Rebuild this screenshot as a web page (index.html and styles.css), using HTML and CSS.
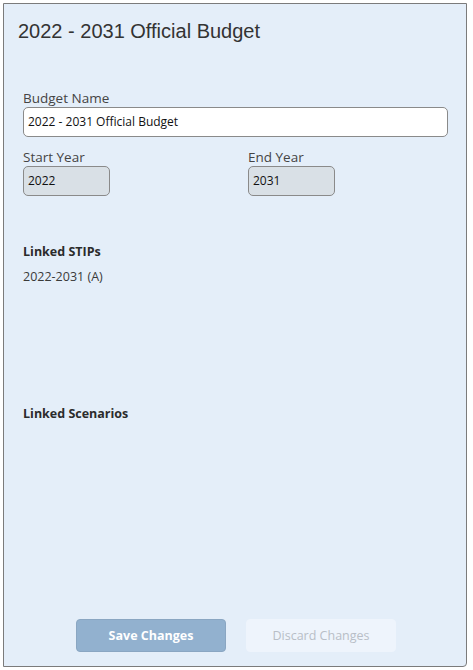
FILE: index.html
```html
<!DOCTYPE html>
<html>
<head>
<meta charset="utf-8">
<link rel="stylesheet" href="styles.css">
</head>
<body>
<div class="panel">
  <h1 class="title">2022 - 2031 Official Budget</h1>
  <div class="form">
    <div class="field">
      <label class="label">Budget Name</label>
      <div class="input wide">2022 - 2031 Official Budget</div>
    </div>
    <div class="row">
      <div class="field col">
        <label class="label">Start Year</label>
        <div class="input year">2022</div>
      </div>
      <div class="field col">
        <label class="label">End Year</label>
        <div class="input year">2031</div>
      </div>
    </div>
    <div class="section stips">
      <div class="section-title">Linked STIPs</div>
      <div class="section-item">2022-2031 (A)</div>
    </div>
    <div class="section scen">
      <div class="section-title">Linked Scenarios</div>
    </div>
  </div>
  <div class="actions">
    <button class="btn save">Save Changes</button>
    <button class="btn discard">Discard Changes</button>
  </div>
</div>
</body>
</html>
```

FILE: styles.css
```css
html, body {
  margin: 0;
  padding: 0;
  background: #ffffff;
}
body {
  font-family: "Open Sans", "Noto Sans", sans-serif;
  color: #333333;
}
.panel {
  box-sizing: border-box;
  margin: 3px 0 0 3px;
  width: 464px;
  height: 664px;
  border: 1px solid #7b7b7b;
  border-radius: 0 0 4px 0;
  background: #e4eef9;
  display: flex;
  flex-direction: column;
  padding: 15px 18px 14px 14px;
}
.title {
  margin: 0;
  font-family: "Liberation Sans", Arial, sans-serif;
  font-weight: normal;
  font-size: 20px;
  line-height: 24px;
  color: #333333;
}
.form {
  padding-left: 5px;
  margin-top: 46px;
  display: flex;
  flex-direction: column;
}
.label {
  display: block;
  font-size: 13.5px;
  line-height: 18px;
  color: #444444;
  margin-bottom: 0px;
}
.input {
  box-sizing: border-box;
  height: 30px;
  border: 1px solid #8a8a8a;
  border-radius: 5px;
  font-size: 12px;
  line-height: 28px;
  padding-left: 4px;
  color: #111111;
}
.wide {
  width: 425px;
  background: #ffffff;
}
.row {
  display: flex;
  margin-top: 11px;
}
.col {
  width: 225px;
  flex-shrink: 0;
}
.col + .col {
  width: auto;
  flex: 1;
}
.year {
  width: 87px;
  background: #d9e0e6;
}
.section-title {
  font-weight: bold;
  font-size: 12.5px;
  line-height: 18px;
  color: #2b2b2b;
}
.section-item {
  font-size: 12.5px;
  line-height: 18px;
  margin-top: 7px;
  color: #3a3a3a;
}
.stips {
  margin-top: 47px;
}
.scen {
  margin-top: 119px;
}
.actions {
  margin-top: auto;
  display: flex;
  gap: 20px;
  padding-left: 58px;
}
.btn {
  box-sizing: border-box;
  width: 150px;
  height: 33px;
  border-radius: 4px;
  font-family: "Open Sans", "Noto Sans", sans-serif;
  font-size: 12.5px;
}
.save {
  background: #92b1cf;
  border: 1px solid #8aa6c2;
  color: #ffffff;
  font-weight: bold;
}
.discard {
  background: #eef4fc;
  border: 1px solid #eef4fc;
  color: #b8bec7;
}
```
